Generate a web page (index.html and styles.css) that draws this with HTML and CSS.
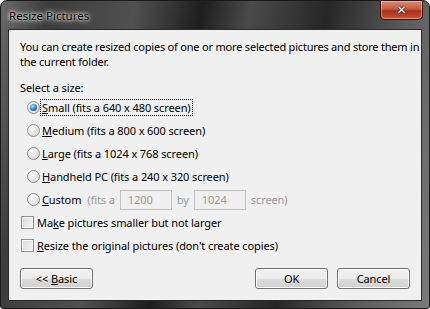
FILE: index.html
```html
<!DOCTYPE html>
<html lang="en">

<head>
    <meta charset="UTF-8">
    <title>Resize Pictures</title>
    <link rel="stylesheet" href="styles.css">
</head>

<body>

    <div class="window">

        <div class="titlebar">
            <span class="title">Resize Pictures</span>
            <span class="close">&#x2715;</span>
        </div>

        <div class="client">

            <p class="intro">You can create resized copies of one or more selected pictures and store them in<br>the current folder.</p>

            <p class="label">Select a size:</p>

            <div class="sizes">
                <label class="option">
                    <span class="radio checked"></span>
                    <span class="focus"><u>S</u>mall (fits a 640 x 480 screen)</span>
                </label>
                <label class="option">
                    <span class="radio"></span>
                    <span><u>M</u>edium (fits a 800 x 600 screen)</span>
                </label>
                <label class="option">
                    <span class="radio"></span>
                    <span><u>L</u>arge (fits a 1024 x 768 screen)</span>
                </label>
                <label class="option">
                    <span class="radio"></span>
                    <span><u>H</u>andheld PC (fits a 240 x 320 screen)</span>
                </label>
                <label class="option">
                    <span class="radio"></span>
                    <span class="custom-name"><u>C</u>ustom</span>
                    <span class="muted">(fits a</span>
                    <span class="field">1200</span>
                    <span class="muted">by</span>
                    <span class="field">1024</span>
                    <span class="muted">screen)</span>
                </label>
            </div>

            <label class="check-row">
                <span class="checkbox"></span>
                <span>Ma<u>k</u>e pictures smaller but not larger</span>
            </label>
            <label class="check-row">
                <span class="checkbox"></span>
                <span><u>R</u>esize the original pictures (don't create copies)</span>
            </label>

            <div class="buttons">
                <button class="btn">&lt;&lt; <u>B</u>asic</button>
                <span class="spacer"></span>
                <button class="btn">OK</button>
                <button class="btn">Cancel</button>
            </div>

        </div>

    </div>

</body>

</html>
```

FILE: styles.css
```css
body {
    margin: 0;
    padding: 0;
    background-color: #ffffff;
    font-family: 'Noto Sans', sans-serif;
    font-size: 11px;
    letter-spacing: -0.1px;
    color: #000;
}

.window {
    width: 430px;
    height: 309px;
    box-sizing: border-box;
    padding: 0 7px 7px 7px;
    border: 1px solid #1a1a1a;
    border-radius: 7px 7px 3px 3px;
    background: linear-gradient(100deg, #6a6a6a 0%, #3c3c3c 10%, #505050 28%, #1e1e1e 42%, #4a4a4a 52%, #262626 68%, #5c5c5c 85%, #7a7a7a 100%);
    display: flex;
    flex-direction: column;
}

.titlebar {
    height: 28px;
    display: flex;
    align-items: flex-start;
    justify-content: space-between;
}

.title {
    margin-top: 7px;
    padding: 0 6px 0 1px;
    color: #000;
    font-size: 11.5px;
    letter-spacing: 0;
    text-shadow: 0 0 6px #d8d8d8, 0 0 4px #d8d8d8, 0 0 2px #e8e8e8;
}

.close {
    width: 43px;
    height: 19px;
    margin-right: -1px;
    box-sizing: border-box;
    border: 1px solid #3a1208;
    border-top: none;
    border-radius: 0 0 5px 5px;
    background: linear-gradient(#d98a78 0%, #c65a40 45%, #a8301a 55%, #c8553a 100%);
    box-shadow: inset 0 0 0 1px rgba(255, 210, 190, 0.5);
    color: #fff;
    font-family: 'DejaVu Sans', sans-serif;
    font-weight: bold;
    font-size: 12px;
    line-height: 18px;
    text-align: center;
    text-shadow: 0 0 1px #300, 0 0 2px #400;
}

.client {
    flex: 1;
    background-color: #f0f0f0;
    border: 1px solid #2a2a2a;
    padding: 9px 0 0 11px;
    display: flex;
    flex-direction: column;
}

.intro {
    margin: 0;
    line-height: 15px;
    white-space: nowrap;
    letter-spacing: -0.2px;
}

.label {
    margin: 11px 0 1px 0;
    line-height: 15px;
}

.sizes {
    display: flex;
    flex-direction: column;
    padding-left: 7px;
}

.option,
.check-row {
    height: 23px;
    display: flex;
    align-items: center;
    gap: 2px;
    white-space: nowrap;
}

.check-row {
    margin-left: 1px;
    gap: 3px;
}

.radio {
    width: 13px;
    height: 13px;
    box-sizing: border-box;
    border: 1px solid #8f9092;
    border-radius: 50%;
    background: radial-gradient(circle at 40% 35%, #ffffff 0%, #e4e4e4 55%, #cfcfcf 100%);
    display: flex;
    align-items: center;
    justify-content: center;
}

.radio.checked::after {
    content: "";
    width: 7px;
    height: 7px;
    border-radius: 50%;
    background: radial-gradient(circle at 40% 35%, #b8e6ff 0%, #2a8ad4 45%, #0c3f7a 100%);
}

.focus {
    outline: 1px dotted #000;
    outline-offset: 0;
    padding: 0 1px;
    margin-left: -1px;
}

.custom-name {
    margin-right: 4px;
}

.muted {
    color: #9a9a9a;
}

.field {
    width: 52px;
    height: 20px;
    box-sizing: border-box;
    border: 1px solid #c2c2c2;
    background-color: #f0f0f0;
    color: #9a9a9a;
    padding-left: 7px;
    line-height: 18px;
    margin: 0 3px;
}

.checkbox {
    width: 13px;
    height: 13px;
    box-sizing: border-box;
    border: 1px solid #8f8f8f;
    background: linear-gradient(135deg, #dcdcdc 0%, #f4f4f4 100%);
    box-shadow: inset 0 0 0 1px #f8f8f8;
}

.buttons {
    display: flex;
    gap: 9px;
    margin-top: 11px;
    padding-right: 11px;
}

.spacer {
    flex: 1;
}

.btn {
    width: 73px;
    height: 21px;
    box-sizing: border-box;
    border: 1px solid #707070;
    border-radius: 3px;
    background: linear-gradient(#f2f2f2 0%, #ebebeb 50%, #dddddd 51%, #cfcfcf 100%);
    box-shadow: inset 0 0 0 1px #fcfcfc;
    font-family: inherit;
    font-size: 11px;
    letter-spacing: -0.1px;
    padding: 0;
    color: #000;
}
```
